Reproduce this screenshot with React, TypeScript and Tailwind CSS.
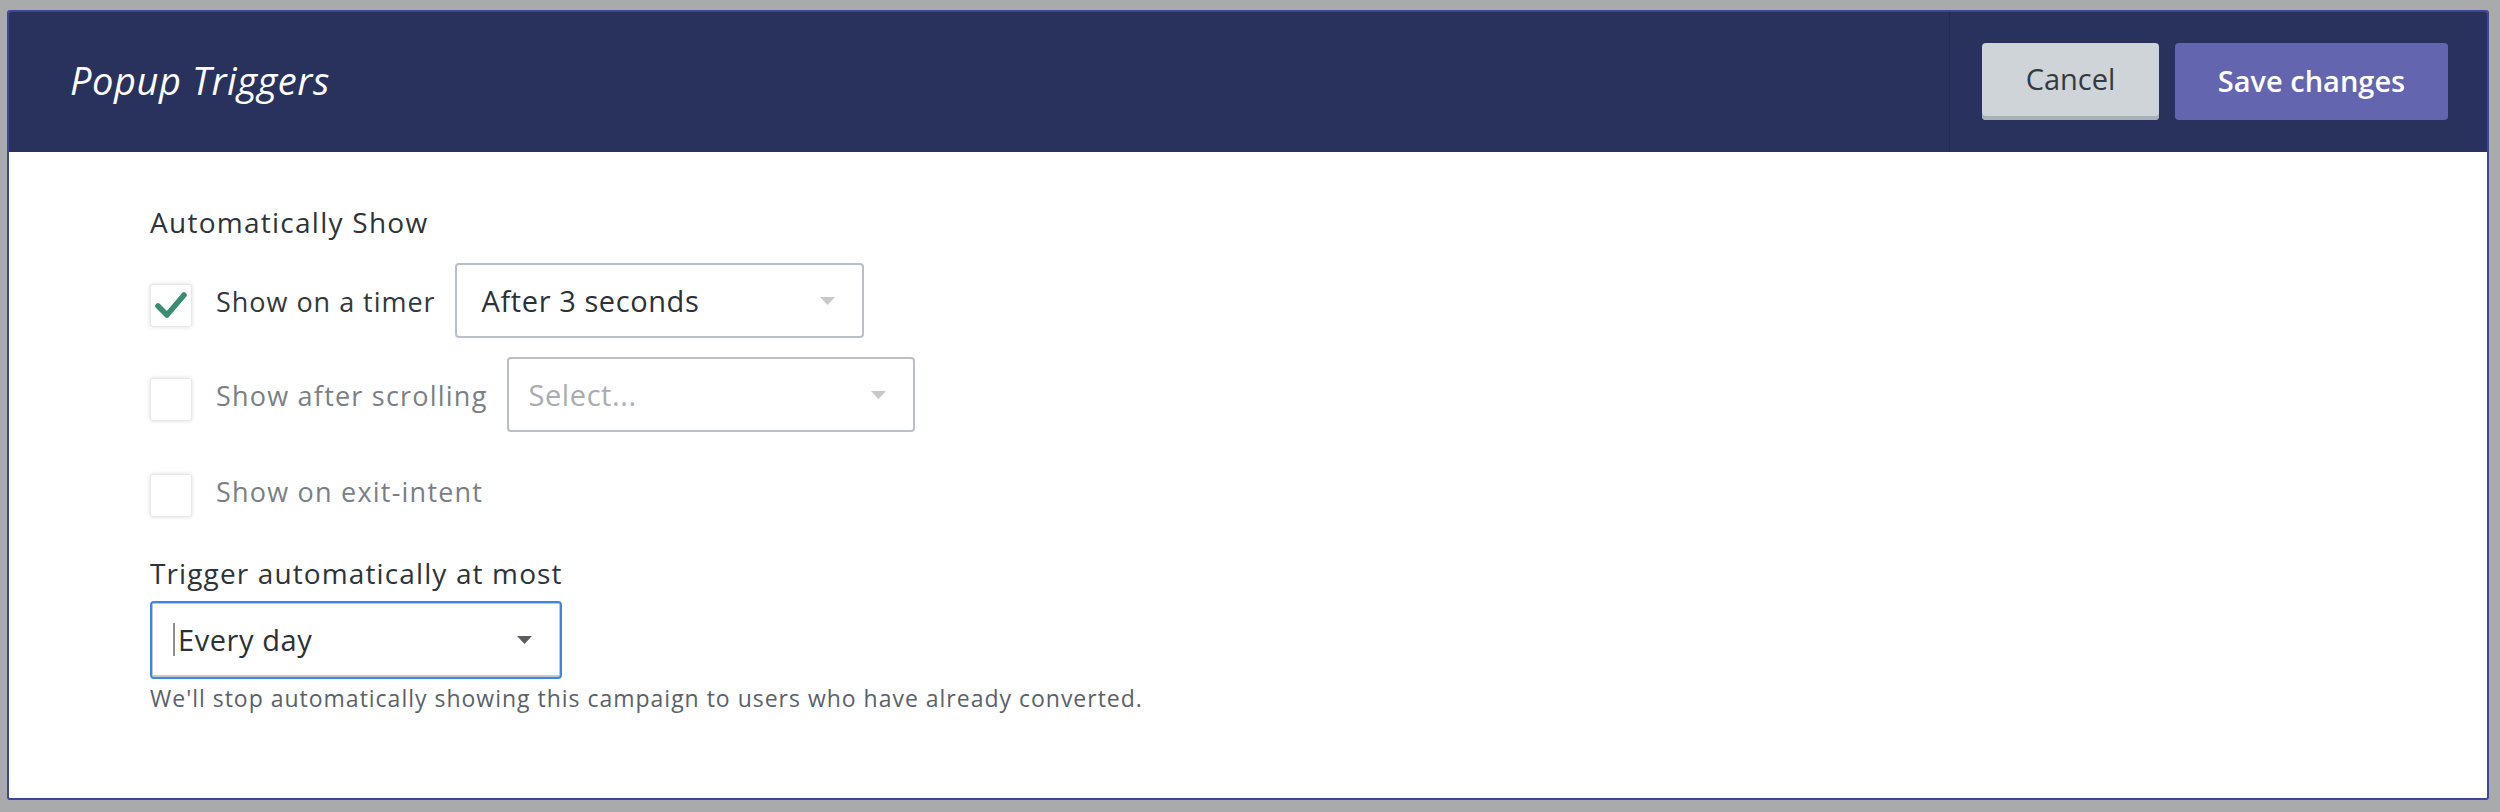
import React from "react";

const font = { fontFamily: '"Open Sans", "Noto Sans", sans-serif' };

function Check({ checked }: { checked?: boolean }) {
  return (
    <div className="w-[42px] h-[43px] rounded-[3px] border border-[#e8e8e8] bg-white shadow-[0_0_4px_rgba(0,0,0,0.14)] flex items-center justify-center shrink-0">
      {checked && (
        <svg width="32" height="27" viewBox="0 0 32 27">
          <path d="M3 14 L12 23 L29 3" fill="none" stroke="#3a8d73" strokeWidth="5.5" strokeLinecap="round" strokeLinejoin="round" />
        </svg>
      )}
    </div>
  );
}

function Arrow({ color }: { color: string }) {
  return (
    <svg width="15" height="8" viewBox="0 0 15 8">
      <path d="M0 0 H15 L7.5 8 Z" fill={color} />
    </svg>
  );
}

export default function App() {
  return (
    <div className="w-[2500px] h-[812px] bg-[#a9aaac] pt-[10px] pl-[7px] pr-[11px] pb-[12px]" style={font}>
      <div className="h-full border-2 border-[#3c4797] rounded-[3px] bg-white flex flex-col overflow-hidden">
        <div className="h-[140px] bg-[#29325c] flex items-stretch justify-between shrink-0">
          <div className="flex items-center pl-[61px] pb-[5px]">
            <span className="text-[38px] italic text-white leading-none tracking-[0.015em]">Popup Triggers</span>
          </div>
          <div className="flex items-center gap-[16px] pl-[32px] pr-[39px] pb-[2px] border-l border-[#232a50]">
            <button className="w-[177px] h-[77px] rounded-[4px] bg-[#cfd4d8] shadow-[inset_0_-4px_0_#aab0b5] text-[29px] text-[#333a40] pb-[4px]">Cancel</button>
            <button className="w-[273px] h-[77px] rounded-[4px] bg-[#6365ae] text-[29px] font-semibold text-white">Save changes</button>
          </div>
        </div>
        <div className="pl-[141px] pt-[56px] flex flex-col">
          <div className="text-[28px] leading-[28px] text-[#2e3338] tracking-[0.045em]">Automatically Show</div>
          <div className="mt-[27px] flex items-center h-[75px]">
            <div className="flex items-center mt-[10px]">
              <Check checked />
              <span className="ml-[24px] text-[27px] text-[#33383d] pb-[6px] tracking-[0.036em]">Show on a timer</span>
            </div>
            <div className="ml-[19px] w-[409px] h-[75px] rounded-[4px] border-2 border-[#b9bec7] flex items-center justify-between pl-[25px] pr-[27px]">
              <span className="text-[29px] text-[#2d3136] tracking-[0.02em]">After 3 seconds</span>
              <Arrow color="#c9c9c9" />
            </div>
          </div>
          <div className="mt-[19px] flex items-center h-[75px]">
            <div className="flex items-center mt-[10px]">
              <Check />
              <span className="ml-[24px] text-[27px] text-[#7b7f85] pb-[6px] tracking-[0.045em]">Show after scrolling</span>
            </div>
            <div className="ml-[19px] w-[408px] h-[75px] rounded-[4px] border-2 border-[#b9bec7] flex items-center justify-between pl-[20px] pr-[27px]">
              <span className="text-[29px] text-[#a9adb2] tracking-[0.02em]">Select...</span>
              <Arrow color="#c9c9c9" />
            </div>
          </div>
          <div className="mt-[40px] flex items-center">
            <Check />
            <span className="ml-[24px] text-[27px] text-[#7b7f85] pb-[6px] tracking-[0.045em]">Show on exit-intent</span>
          </div>
          <div className="mt-[40px] text-[28px] leading-[28px] text-[#2e3338] tracking-[0.04em]">Trigger automatically at most</div>
          <div className="mt-[14px] w-[412px] h-[78px] rounded-[4px] border-2 border-[#3b86e8] shadow-[inset_0_0_0_1px_#c3c9d0,inset_0_-2px_0_#c3c9d0] flex items-center justify-between pl-[21px] pr-[28px]">
            <div className="flex items-center">
              <div className="w-[2px] h-[33px] bg-[#8a8f95]" />
              <span className="ml-[3px] text-[29px] text-[#2d3136] tracking-[0.02em]">Every day</span>
            </div>
            <Arrow color="#5a5d61" />
          </div>
          <div className="mt-[8px] text-[23px] leading-[23px] text-[#5b6169] tracking-[0.043em]">We'll stop automatically showing this campaign to users who have already converted.</div>
        </div>
      </div>
    </div>
  );
}
